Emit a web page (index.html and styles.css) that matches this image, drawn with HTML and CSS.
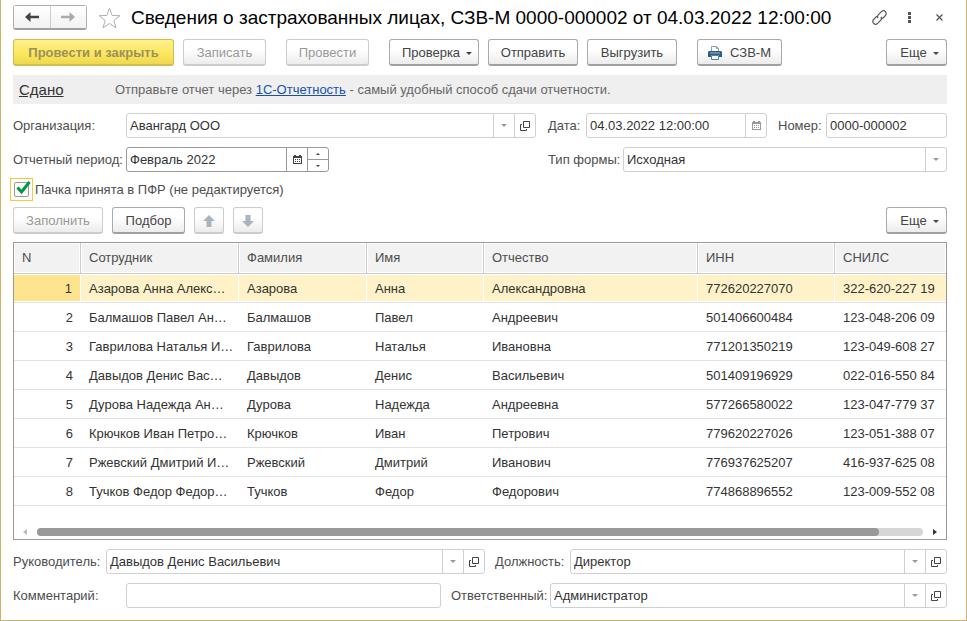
FILE: index.html
```html
<!DOCTYPE html>
<html lang="ru">
<head>
    <meta charset="UTF-8">
    <meta name="viewport" content="width=device-width, initial-scale=1.0">
    <title>Сведения о застрахованных лицах, СЗВ-М</title>
    <link rel="stylesheet" href="styles.css">
</head>
<body>
    <!-- Shared icons -->
    <svg class="sprite" aria-hidden="true">
        <symbol id="caret" viewBox="0 0 6 3"><path d="M0 0h6L3 3z"/></symbol>
        <symbol id="caret-up" viewBox="0 0 6 3"><path d="M0 3h6L3 0z"/></symbol>
        <symbol id="open" viewBox="0 0 10 10"><path d="M3.500.5h6v6h-6zM2 3.500H.5v6h6V8" fill="none" stroke="currentColor"/></symbol>
        <symbol id="calendar" viewBox="0 0 9 9"><path d="M0 1h1V0h2v1h3V0h2v1h1v8H0zM1 3v5h7V3z" fill-rule="evenodd"/><path d="M2 4h1v1H2zM4 4h1v1H4zM6 4h1v1H6zM2 6h1v1H2zM4 6h1v1H4zM6 6h1v1H6z"/></symbol>
        <symbol id="arrow" viewBox="0 0 12 12"><path d="M6 0l6 6H8.500v6h-5V6H0z"/></symbol>
        <symbol id="nav-arrow" viewBox="0 0 14 10"><path d="M0 5l5.500-5v3.800H14v2.400H5.500V10z"/></symbol>
    </svg>

    <main class="window">
        <header class="title-bar">
            <div class="nav">
                <button type="button" aria-label="Назад"><svg width="14" height="10"><use href="#nav-arrow"/></svg></button>
                <button type="button" aria-label="Вперед" disabled><svg class="flip" width="14" height="10"><use href="#nav-arrow"/></svg></button>
            </div>
            <button type="button" class="icon-btn star" aria-label="В избранное">
                <svg width="23" height="22" viewBox="0 0 23 22"><path d="M11.500 1.300l2.700 7.200 7.700.2-6.100 4.800 2.200 7.300-6.500-4.300L5 20.800l2.200-7.300-6.100-4.800 7.700-.2z" fill="none" stroke="#a9b1b8"/></svg>
            </button>
            <h1>Сведения о застрахованных лицах, СЗВ-М 0000-000002 от 04.03.2022 12:00:00</h1>
            <div class="title-tools">
                <button type="button" class="icon-btn" aria-label="Ссылка">
                    <svg width="17" height="17" viewBox="0 0 17 17"><g transform="rotate(-45 8.500 8.500)" fill="none" stroke="#555" stroke-width="1.200"><path d="M7.500 5.700H3a2.800 2.800 0 0 0 0 5.600h4.200a2.800 2.800 0 0 0 2.800-2.300"/><path d="M9.500 11.300H14a2.800 2.800 0 0 0 0-5.600H9.800A2.800 2.800 0 0 0 7 8"/></g></svg>
                </button>
                <button type="button" class="icon-btn" aria-label="Меню">
                    <svg width="3" height="11" viewBox="0 0 3 11"><path d="M0 0h3v3H0zM0 4h3v3H0zM0 8h3v3H0z"/></svg>
                </button>
                <button type="button" class="icon-btn" aria-label="Закрыть">
                    <svg width="7" height="7" viewBox="0 0 7 7"><path d="M.5.5l6 6M6.500.5l-6 6" stroke="#555" stroke-width="1.200"/></svg>
                </button>
            </div>
        </header>

        <div class="toolbar">
            <div class="group">
                <button type="button" class="btn primary" disabled>Провести и закрыть</button>
                <button type="button" class="btn medium" disabled>Записать</button>
            </div>
            <button type="button" class="btn medium" disabled>Провести</button>
            <div class="group">
                <button type="button" class="btn wide">Проверка<svg class="menu-caret" width="6" height="3"><use href="#caret"/></svg></button>
                <button type="button" class="btn wide">Отправить</button>
                <button type="button" class="btn wide">Выгрузить</button>
            </div>
            <button type="button" class="btn print">
                <svg width="14" height="14" viewBox="0 0 14 14"><path d="M3.500 6V.5h5l2 2V6" fill="#fff" stroke="#8a9fb3"/><path d="M8.500.5v2h2" fill="none" stroke="#8a9fb3"/><path d="M1 5h12l1 1v5h-3V9H3v2H0V6z" fill="#2d5d8b"/><path d="M2 7h10" stroke="#9db8d0"/><path d="M3.500 9.500h7v4h-7z" fill="#fff" stroke="#5d7f9f"/></svg>СЗВ-М
            </button>
            <button type="button" class="btn more">Еще<svg class="menu-caret" width="6" height="3"><use href="#caret"/></svg></button>
        </div>

        <div class="status">
            <a class="state" href="#">Сдано</a>
            <p>Отправьте отчет через <a href="#">1С-Отчетность</a> - самый удобный способ сдачи отчетности.</p>
        </div>

        <div class="row top">
            <div class="field">
                <label class="w-main" for="org">Организация:</label>
                <div class="combo">
                    <input id="org" type="text" value="Авангард ООО">
                    <button type="button" aria-label="Выбрать"><svg width="6" height="3"><use href="#caret"/></svg></button>
                    <button type="button" class="dark" aria-label="Открыть"><svg width="10" height="10"><use href="#open"/></svg></button>
                </div>
            </div>
            <div class="side">
                <div class="field date">
                    <label for="date">Дата:</label>
                    <div class="combo">
                        <input id="date" type="text" value="04.03.2022 12:00:00">
                        <button type="button" aria-label="Календарь"><svg width="9" height="9"><use href="#calendar"/></svg></button>
                    </div>
                </div>
                <div class="field">
                    <label class="w-number" for="number">Номер:</label>
                    <div class="combo"><input id="number" type="text" value="0000-000002"></div>
                </div>
            </div>
        </div>

        <div class="row top">
            <div class="field">
                <label class="w-main" for="period">Отчетный период:</label>
                <div class="combo period">
                    <input id="period" type="text" value="Февраль 2022">
                    <button type="button" class="dark" aria-label="Календарь"><svg width="9" height="9"><use href="#calendar"/></svg></button>
                    <div class="spin">
                        <button type="button" aria-label="Следующий"><svg width="4" height="2"><use href="#caret-up"/></svg></button>
                        <button type="button" aria-label="Предыдущий"><svg width="4" height="2"><use href="#caret"/></svg></button>
                    </div>
                </div>
            </div>
            <div class="side">
                <div class="field">
                    <label class="w-short" for="form-type">Тип формы:</label>
                    <div class="combo">
                        <select id="form-type">
                            <option>Исходная</option>
                        </select>
                        <span class="select-caret"><svg width="6" height="3"><use href="#caret"/></svg></span>
                    </div>
                </div>
            </div>
        </div>

        <div class="check-row">
            <span class="check">
                <input type="checkbox" id="accepted" checked>
                <svg width="15" height="14" viewBox="0 0 15 14"><path d="M1.500 6.500l4 4.500 8-10" fill="none" stroke="#009646" stroke-width="3"/></svg>
            </span>
            <label for="accepted">Пачка принята в ПФР (не редактируется)</label>
        </div>

        <div class="toolbar list-bar">
            <div class="group">
                <button type="button" class="btn wide" disabled>Заполнить</button>
                <button type="button" class="btn pick">Подбор</button>
                <button type="button" class="btn square" aria-label="Вверх" disabled><svg width="12" height="12"><use href="#arrow"/></svg></button>
                <button type="button" class="btn square" aria-label="Вниз" disabled><svg class="turn" width="12" height="12"><use href="#arrow"/></svg></button>
            </div>
            <button type="button" class="btn more">Еще<svg class="menu-caret" width="6" height="3"><use href="#caret"/></svg></button>
        </div>

        <div class="list">
            <table>
                <colgroup>
                    <col class="c-n"><col class="c-employee"><col class="c-surname"><col class="c-name"><col><col class="c-inn"><col class="c-snils">
                </colgroup>
                <thead>
                    <tr><th>N</th><th>Сотрудник</th><th>Фамилия</th><th>Имя</th><th>Отчество</th><th>ИНН</th><th>СНИЛС</th></tr>
                </thead>
                <tbody>
                    <tr class="selected"><td>1</td><td>Азарова Анна Алекс…</td><td>Азарова</td><td>Анна</td><td>Александровна</td><td>772620227070</td><td>322-620-227 19</td></tr>
                    <tr><td>2</td><td>Балмашов Павел Ан…</td><td>Балмашов</td><td>Павел</td><td>Андреевич</td><td>501406600484</td><td>123-048-206 09</td></tr>
                    <tr><td>3</td><td>Гаврилова Наталья И…</td><td>Гаврилова</td><td>Наталья</td><td>Ивановна</td><td>771201350219</td><td>123-049-608 27</td></tr>
                    <tr><td>4</td><td>Давыдов Денис Вас…</td><td>Давыдов</td><td>Денис</td><td>Васильевич</td><td>501409196929</td><td>022-016-550 84</td></tr>
                    <tr><td>5</td><td>Дурова Надежда Ан…</td><td>Дурова</td><td>Надежда</td><td>Андреевна</td><td>577266580022</td><td>123-047-779 37</td></tr>
                    <tr><td>6</td><td>Крючков Иван Петро…</td><td>Крючков</td><td>Иван</td><td>Петрович</td><td>779620227026</td><td>123-051-388 07</td></tr>
                    <tr><td>7</td><td>Ржевский Дмитрий И…</td><td>Ржевский</td><td>Дмитрий</td><td>Иванович</td><td>776937625207</td><td>416-937-625 08</td></tr>
                    <tr><td>8</td><td>Тучков Федор Федор…</td><td>Тучков</td><td>Федор</td><td>Федорович</td><td>774868896552</td><td>123-009-552 08</td></tr>
                </tbody>
            </table>
            <div class="scrollbar">
                <svg class="off" width="4" height="6" viewBox="0 0 4 6"><path d="M4 0v6L0 3z"/></svg>
                <div class="track"><div class="thumb"></div></div>
                <svg width="4" height="6" viewBox="0 0 4 6"><path d="M0 0v6l4-3z"/></svg>
            </div>
        </div>

        <div class="row">
            <div class="field">
                <label class="w-head" for="head">Руководитель:</label>
                <div class="combo">
                    <input id="head" type="text" value="Давыдов Денис Васильевич">
                    <button type="button" aria-label="Выбрать"><svg width="6" height="3"><use href="#caret"/></svg></button>
                    <button type="button" class="dark" aria-label="Открыть"><svg width="10" height="10"><use href="#open"/></svg></button>
                </div>
            </div>
            <div class="field position">
                <label class="w-short" for="position">Должность:</label>
                <div class="combo">
                    <input id="position" type="text" value="Директор">
                    <button type="button" aria-label="Выбрать"><svg width="6" height="3"><use href="#caret"/></svg></button>
                    <button type="button" class="dark" aria-label="Открыть"><svg width="10" height="10"><use href="#open"/></svg></button>
                </div>
            </div>
        </div>

        <div class="row">
            <div class="field">
                <label class="w-main" for="comment">Комментарий:</label>
                <div class="combo"><input id="comment" type="text"></div>
            </div>
            <div class="field responsible">
                <label class="w-resp" for="responsible">Ответственный:</label>
                <div class="combo">
                    <input id="responsible" type="text" value="Администратор">
                    <button type="button" aria-label="Выбрать"><svg width="6" height="3"><use href="#caret"/></svg></button>
                    <button type="button" class="dark" aria-label="Открыть"><svg width="10" height="10"><use href="#open"/></svg></button>
                </div>
            </div>
        </div>
    </main>
</body>
</html>
```

FILE: styles.css
```css
* {
    box-sizing: border-box;
}

body {
    margin: 0;
    background: #fff;
    color: #333;
    font: 13px/16px "Liberation Sans", Arial, sans-serif;
}

button, input, select {
    font: inherit;
    color: inherit;
    margin: 0;
    padding: 0;
}

svg {
    display: block;
    flex: none;
    fill: currentColor;
}

.sprite {
    position: absolute;
    width: 0;
    height: 0;
}

.flip {
    transform: scaleX(-1);
}

.turn {
    transform: rotate(180deg);
}

.window {
    min-height: 100vh;
    padding: 5px 19px 12px 12px;
    border: 1px solid #c8b566;
    border-top: 0;
}

/* Title */
.title-bar {
    display: flex;
    align-items: center;
    height: 25px;
}

.nav {
    display: flex;
    width: 74px;
    height: 25px;
    border: 1px solid #b0b0b0;
    border-bottom: 2px solid #a0a0a0;
    border-radius: 3px;
}

.nav button {
    flex: 1;
    display: flex;
    align-items: center;
    justify-content: center;
    border: 0;
    background: linear-gradient(#fff, #f2f2f2);
    color: #444;
}

.nav button + button {
    border-left: 1px solid #ccc;
    color: #aaa;
}

.icon-btn {
    display: flex;
    align-items: center;
    justify-content: center;
    border: 0;
    background: none;
    color: #555;
}

.star {
    margin: 0 10px 0 11px;
}

h1 {
    flex: 1;
    margin: 0;
    color: #000;
    font-size: 19px;
    font-weight: normal;
    line-height: 24px;
    white-space: nowrap;
}

.title-tools {
    display: flex;
    align-items: center;
    gap: 14px;
}

.title-tools button {
    width: 16px;
    height: 24px;
}

/* Buttons */
.toolbar {
    display: flex;
    gap: 20px;
    margin-top: 9px;
}

.group {
    display: flex;
    gap: 9px;
}

.btn {
    display: flex;
    align-items: center;
    justify-content: center;
    height: 27px;
    padding-top: 1px;
    border: 1px solid #aaa;
    border-bottom: 2px solid #a0a0a0;
    border-radius: 3px;
    background: linear-gradient(#fff 40%, #ececec);
    color: #444;
}

.btn:disabled {
    border-color: #ccc;
    color: #999;
}

.btn.primary {
    width: 161px;
    border-color: #d3bd4e;
    background: linear-gradient(#fff08c, #fbe65c 60%, #eed850);
    color: #9a915c;
    font-weight: bold;
}

.btn.medium {
    width: 83px;
}

.btn.wide {
    width: 90px;
}

.btn.pick {
    width: 73px;
}

.btn.print {
    width: 85px;
    gap: 8px;
}

.btn.square {
    width: 30px;
    color: #aab4bb;
}

.btn.more {
    width: 61px;
    margin-left: auto;
}

.btn:has(.menu-caret) {
    padding-left: 6px;
}

.menu-caret {
    margin: 2px 0 0 6px;
}

/* Report status */
.status {
    display: flex;
    align-items: center;
    height: 29px;
    margin-top: 9px;
    padding-left: 6px;
    background: #efefef;
    color: #666;
}

.status p {
    margin: 0;
}

.status a {
    color: #1a4fb0;
}

.status .state {
    width: 96px;
    color: #333;
    font-size: 15px;
}

/* Fields */
.row {
    display: flex;
    gap: 10px;
    margin-top: 9px;
}

.row.top {
    gap: 12px;
}

.field {
    display: flex;
    flex: 1;
    align-items: center;
    min-width: 0;
}

.side {
    display: flex;
    flex: none;
    gap: 11px;
    width: 399px;
}

.date {
    flex: none;
    width: 219px;
}

.position {
    flex: none;
    width: 452px;
}

.responsible {
    flex: none;
    width: 496px;
}

label {
    flex: none;
    color: #4d4d4d;
    white-space: nowrap;
}

.date label {
    width: 38px;
}

.w-main {
    width: 113px;
}

.w-number {
    width: 48px;
}

.w-short {
    width: 75px;
}

.w-head {
    width: 93px;
}

.w-resp {
    width: 99px;
}

.combo {
    display: flex;
    flex: 1;
    min-width: 0;
    height: 25px;
    border: 1px solid #d0d0d0;
    border-radius: 3px;
}

.combo input,
.combo select {
    flex: 1;
    min-width: 0;
    padding: 0 3px;
    border: 0;
    background: none;
    outline: none;
    appearance: none;
}

.combo button,
.select-caret {
    display: flex;
    flex: none;
    align-items: center;
    justify-content: center;
    width: 21px;
    border: 0;
    border-left: 1px solid #d0d0d0;
    background: none;
    color: #999;
}

.combo .dark {
    color: #444;
}

.combo.period {
    flex: none;
    width: 203px;
    border-color: #999;
}

.period button {
    border-color: #999;
}

.spin {
    display: flex;
    flex-direction: column;
    width: 21px;
    border-left: 1px solid #999;
}

.combo .spin button {
    flex: 1;
    width: 20px;
    border-left: 0;
    color: #444;
}

.combo .spin button + button {
    border-top: 1px solid #999;
}

/* Checkbox */
.check-row {
    display: flex;
    align-items: center;
    gap: 2px;
    margin: 6px 0 0 -3px;
}

.check {
    position: relative;
    display: flex;
    align-items: center;
    justify-content: center;
    width: 23px;
    height: 23px;
    border: 1px solid #f7cc2e;
}

.check input {
    width: 15px;
    height: 15px;
    border: 1px solid #999;
    border-radius: 2px;
    appearance: none;
}

.check svg {
    position: absolute;
    left: 5px;
    top: 2px;
    pointer-events: none;
}

.list-bar {
    margin-top: 6px;
}

/* Employee list */
.list {
    margin-top: 8px;
    border: 1px solid #999;
}

table {
    width: 100%;
    border-collapse: separate;
    border-spacing: 0;
    table-layout: fixed;
}

.c-n {
    width: 67px;
}

.c-employee {
    width: 158px;
}

.c-surname {
    width: 128px;
}

.c-name {
    width: 117px;
}

.c-inn {
    width: 137px;
}

.c-snils {
    width: 111px;
}

th, td {
    padding: 0 4px 0 8px;
    text-align: left;
    white-space: nowrap;
}

th {
    height: 31px;
    border-right: 1px solid #ccc;
    border-bottom: 1px solid #ccc;
    background: #f2f2f2;
    box-shadow: inset 0 0 0 1px #fff;
    color: #4d4d4d;
    font-weight: normal;
}

td {
    height: 29px;
    padding-top: 2px;
    border-bottom: 1px solid #e2e2e2;
}

th:last-child {
    border-right: 0;
}

td:first-child {
    padding-right: 8px;
    text-align: right;
}

.selected td {
    border-right: 1px solid #fff;
    background: #fff2c8;
    box-shadow: inset 0 1px #fff, inset 0 -1px #fff;
}

.selected td:first-child {
    background: #ffe48f;
}

.selected td:last-child {
    border-right: 0;
}

.scrollbar {
    display: flex;
    align-items: center;
    gap: 10px;
    height: 33px;
    padding: 19px 9px 0;
}

.scrollbar .off {
    color: #bbb;
}

.track {
    flex: 1;
    height: 8px;
    border-radius: 4px;
    background: #d6d6d6;
}

.thumb {
    width: 95%;
    height: 8px;
    border-radius: 4px;
    background: #999;
}
```
